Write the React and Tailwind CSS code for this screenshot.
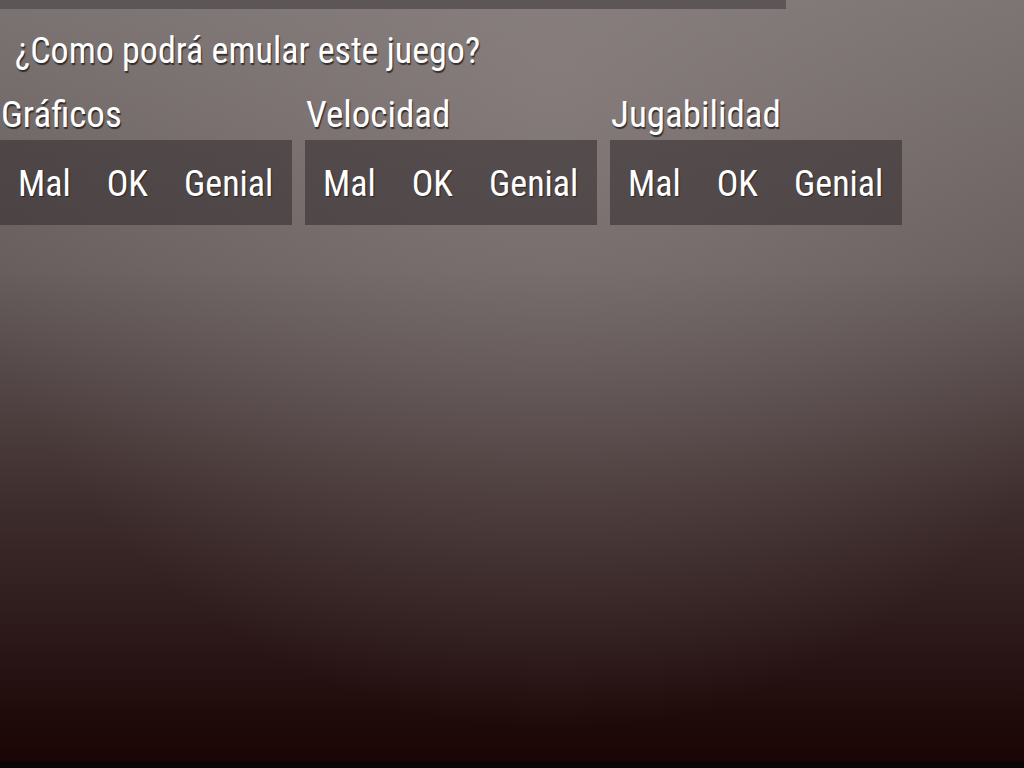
const sections = ['Gráficos', 'Velocidad', 'Jugabilidad'];
const options = ['Mal', 'OK', 'Genial'];

export default function App() {
  return (
    <div
      className="relative flex h-[768px] w-[1024px] flex-col overflow-hidden bg-[radial-gradient(ellipse_60%_85%_at_54%_10%,rgba(150,140,140,0.5),rgba(150,140,140,0)),linear-gradient(to_bottom,#7a7171_0%,#675d5d_35%,#3f2e2e_65%,#1a0404_99%,#080606_99.3%)] text-white [font-family:'Roboto_Condensed',Roboto,sans-serif] [font-stretch:condensed]"
    >
      {/* top bar */}
      <div className="h-[9px] w-[786px] bg-[#5d5656]" />

      <h1 className="mt-[20px] pl-[15px] text-[36px] leading-[44px] [text-shadow:1px_2px_1px_rgba(0,0,0,0.6)]">
        ¿Como podrá emular este juego?
      </h1>

      <div className="mt-[20px] flex gap-[13px]">
        {sections.map((s) => (
          <div key={s} className="flex w-[292px] flex-col">
            <div className="pl-[1px] text-[37px] leading-[44px] [text-shadow:1px_2px_1px_rgba(0,0,0,0.6)]">
              {s}
            </div>
            <div className="mt-[3px] flex h-[85px] items-center bg-[rgba(55,48,48,0.6)]">
              {options.map((o) => (
                <button
                  key={o}
                  className="h-full px-[18px] pt-[2px] text-[36px] leading-[40px] text-white [text-shadow:1px_1px_1px_rgba(0,0,0,0.5)]"
                >
                  {o}
                </button>
              ))}
            </div>
          </div>
        ))}
      </div>
    </div>
  );
}
